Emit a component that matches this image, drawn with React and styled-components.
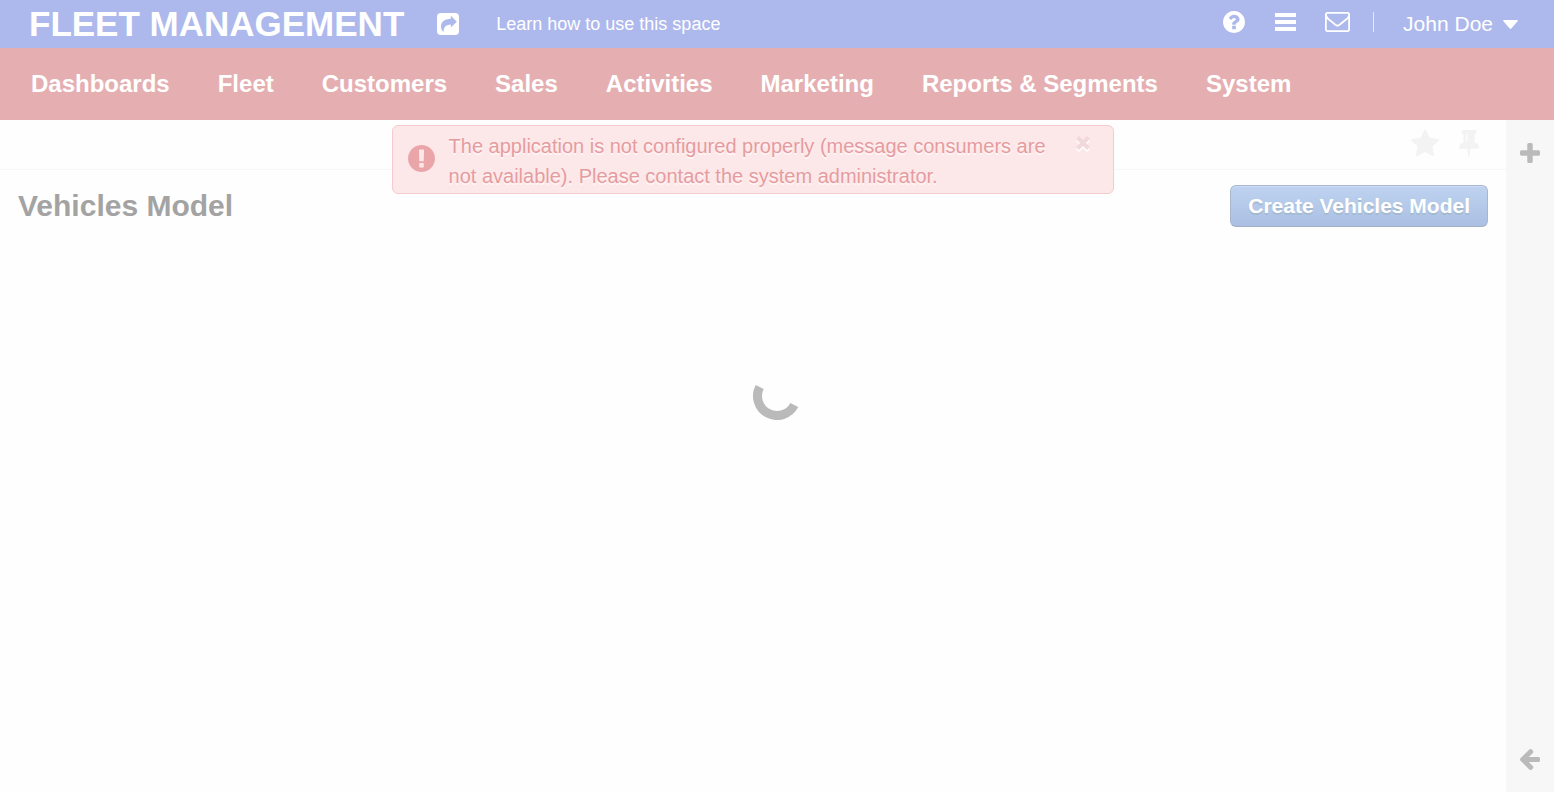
import React from "react";
import styled, { createGlobalStyle } from "styled-components";

const GlobalStyle = createGlobalStyle`
  *, *::before, *::after { box-sizing: border-box; }
  html, body, #root { height: 100%; }
  body {
    margin: 0;
    background: #fefefe;
    color: #a3a3a3;
    font-family: "Liberation Sans", Arial, sans-serif;
  }
  button { font-family: inherit; cursor: pointer; }
`;

const Page = styled.div`
  display: flex;
  flex-direction: column;
  min-height: 100%;
`;

const TopBar = styled.header`
  display: flex;
  align-items: center;
  justify-content: space-between;
  height: 48px;
  padding: 0 36px 0 29px;
  background: #adb9ed;
  color: #fff;
`;

const BarGroup = styled.div`
  display: flex;
  align-items: center;
  gap: ${(p) => p.$gap}px;
  padding-bottom: ${(p) => p.$lift || 0}px;
`;

const Brand = styled.a`
  color: #fff;
  font-size: 35px;
  line-height: 48px;
  font-weight: bold;
  text-decoration: none;
  white-space: nowrap;
`;

const HelpLink = styled.a`
  color: #fff;
  font-size: 18px;
  line-height: 50px;
  text-decoration: none;
  white-space: nowrap;
`;

const IconButton = styled.button`
  display: flex;
  flex: none;
  justify-content: center;
  min-width: ${(p) => p.$minWidth || 0}px;
  padding: 0;
  border: 0;
  background: none;
  color: ${(p) => p.$color || "#fff"};
`;

const Divider = styled.span`
  width: 1px;
  height: 20px;
  background: #e3e8fa;
`;

const UserButton = styled.button`
  display: flex;
  align-items: center;
  gap: 10px;
  padding: 0;
  border: 0;
  background: none;
  color: #fff;
  font-size: 21px;
  line-height: 48px;
  white-space: nowrap;
`;

const Nav = styled.nav`
  display: flex;
  align-items: center;
  gap: 48px;
  height: 72px;
  padding: 0 31px;
  background: #e5afb2;
`;

const NavLink = styled.a`
  color: #fff;
  font-size: 24px;
  line-height: 72px;
  font-weight: bold;
  text-decoration: none;
  white-space: nowrap;
`;

const Body = styled.div`
  display: flex;
  flex: 1;
`;

const Main = styled.main`
  position: relative;
  flex: 1;
  min-width: 0;
`;

const PageTools = styled.div`
  display: flex;
  align-items: center;
  justify-content: flex-end;
  gap: 20px;
  height: 50px;
  padding: 0 27px 2px;
  border-bottom: 1px solid #f6f6f6;
`;

const TitleRow = styled.div`
  display: flex;
  align-items: center;
  justify-content: space-between;
  padding: 15px 18px;
`;

const Title = styled.h1`
  margin: 0;
  font-size: 30px;
  line-height: 42px;
  font-weight: bold;
  color: #a3a3a3;
`;

const PrimaryButton = styled.button`
  height: 42px;
  padding: 0 17px;
  border: 1px solid #a9b6cf;
  border-bottom-color: #a3afc5;
  border-radius: 6px;
  background: linear-gradient(#bfd2f0, #abbfe3);
  box-shadow: inset 0 1px 0 #cddcf4;
  color: #fff;
  font-size: 21px;
  font-weight: bold;
  text-shadow: 0 2px 0 #a3bacf;
  white-space: nowrap;
`;

const Alert = styled.div`
  position: absolute;
  top: 5px;
  left: 26%;
  width: 48%;
  display: flex;
  align-items: center;
  gap: 14px;
  padding: 5px 23px 2px 15px;
  border: 1px solid #f6cbd0;
  border-radius: 6px;
  background: #fde8e9;
  color: #e9a5a8;
`;

const AlertIcon = styled.span`
  padding-bottom: 6px;
`;

const AlertText = styled.p`
  flex: 1;
  margin: 0;
  font-size: 20px;
  line-height: 30px;
  color: #e59ca0;
  text-shadow: 0 2px 0 #fff5f5;
`;

const CloseButton = styled(IconButton)`
  align-self: flex-start;
  margin-top: 5px;
  filter: drop-shadow(0 2px 0 #fff);
`;

const Sidebar = styled.aside`
  display: flex;
  flex-direction: column;
  align-items: center;
  justify-content: space-between;
  width: 48px;
  padding: 23px 0 22px;
  background: #f7f7f7;
`;

const Loader = styled.div`
  position: fixed;
  inset: 0;
  display: flex;
  align-items: center;
  justify-content: center;
  pointer-events: none;
`;

const Svg = styled.svg`
  display: block;
  flex: none;
  fill: currentColor;
`;

const ICONS = {
  share: ["0 0 22 22", "M4 0h14q4 0 4 4v14q0 4-4 4h-14q-4 0-4-4v-14q0-4 4-4zM13.800 2.700v3.100C7.500 6 4 9 4 13.500c0 2.500 .9 4.200 2.600 5.600C6.400 14.500 8.500 11.800 13.800 11.500v3.100l6-5.900z"],
  question: ["128 128 1536 1536", "M1024 1376v-192q0-14-9-23t-23-9h-192q-14 0-23 9t-9 23v192q0 14 9 23t23 9h192q14 0 23-9t9-23zm256-672q0-88-55.5-163t-138.5-116-170-41q-243 0-371 213-15 24 8 42l132 100q7 6 19 6 16 0 25-12 53-68 86-92 34-24 86-24 48 0 85.5 26t37.5 59q0 38-20 61t-68 45q-63 28-115.5 86.5t-52.5 125.5v36q0 14 9 23t23 9h192q14 0 23-9t9-23q0-19 21.5-49.5t54.5-49.5q32-18 49-28.5t46-35 44.5-48 28-60.5 12.5-81zm384 192q0 209-103 385.5t-279.5 279.5-385.5 103-385.5-103-279.5-279.5-103-385.5 103-385.5 279.5-279.5 385.5-103 385.5 103 279.5 279.5 103 385.5z"],
  bars: ["0 0 21 18", "M0 0h21v4h-21zM0 7h21v4h-21zM0 14h21v4h-21z"],
  envelope: ["0 256 1792 1408", "M1664 1504v-768q-32 36-69 66-268 206-426 338-51 43-83 67t-86.5 48.500-102.500 24.500h-2q-48 0-102.500-24.500t-86.500-48.500-83-67q-158-132-426-338-37-30-69-66v768q0 13 9.500 22.500t22.500 9.500h1472q13 0 22.500-9.500t9.500-22.500zm0-1051v-24.500l-.5-13-3-12.500-5.500-9-9-7.500-14-2.500h-1472q-13 0-22.500 9.500t-9.500 22.500q0 168 147 284 193 152 401 317 6 5 35 29.500t46 37.500 44.500 31.500 50.500 27.500 43 9h2q20 0 43-9t50.500-27.500 44.500-31.500 46-37.500 35-29.500q208-165 401-317 54-43 100.500-115.500t46.500-131.500zm128-37v1088q0 66-47 113t-113 47h-1472q-66 0-113-47t-47-113v-1088q0-66 47-113t113-47h1472q66 0 113 47t47 113z"],
  caret: ["0 0 15 9", "M1 0h13q1.500 .2 .6 1.300l-6.300 7.200q-.8 .8-1.600 0l-6.300-7.200q-.9-1.100 .6-1.300z"],
  star: ["64 64 1664 1600", "M1728 647q0 22-26 48l-363 354 86 500q1 7 1 20 0 21-10.500 35.500t-30.500 14.500q-19 0-40-12l-449-236-449 236q-22 12-40 12-21 0-31.500-14.500t-10.500-35.500q0-6 2-20l86-500-364-354q-25-27-25-48 0-37 56-46l502-73 225-455q19-41 49-41t49 41l225 455 502 73q56 9 56 46z"],
  pin: ["320 128 1152 1664", "M800 864v-448q0-14-9-23t-23-9-23 9-9 23v448q0 14 9 23t23 9 23-9 9-23zm672 352q0 26-19 45t-45 19h-429l-51 483q-2 12-10.500 20.500t-20.500 8.500h-1q-27 0-32-27l-76-485h-404q-26 0-45-19t-19-45q0-123 78.500-221.500t177.500-98.500v-512q-52 0-90-38t-38-90 38-90 90-38h640q52 0 90 38t38 90-38 90-90 38v512q99 0 177.500 98.500t78.500 221.500z"],
  plus: ["192 128 1408 1408", "M1600 736v192q0 40-28 68t-68 28h-416v416q0 40-28 68t-68 28h-192q-40 0-68-28t-28-68v-416h-416q-40 0-68-28t-28-68v-192q0-40 28-68t68-28h416v-416q0-40 28-68t68-28h192q40 0 68 28t28 68v416h416q40 0 68 28t28 68z"],
  arrow: ["192 184 1472 1556", "M1664 896v128q0 53-32.500 90.500t-84.500 37.500h-704l293 294q38 36 38 90t-38 90l-75 76q-37 37-90 37-52 0-91-37l-651-652q-37-37-37-90 0-52 37-91l651-650q38-38 91-38 52 0 90 38l75 74q38 38 38 91t-38 91l-293 293h704q52 0 84.500 37.500t32.500 90.500z"],
  exclamation: ["128 128 1536 1536", "M896 128q209 0 385.500 103t279.500 279.500 103 385.500-103 385.500-279.500 279.500-385.500 103-385.500-103-279.500-279.500-103-385.500 103-385.500 279.500-279.500 385.500-103zm128 1247v-190q0-14-9-23.500t-22-9.500h-192q-13 0-23 10t-10 23v190q0 13 10 23t23 10h192q13 0 22-9.500t9-23.500zm-2-344l18-621q0-12-10-18-10-8-24-8h-220q-14 0-24 8-10 6-10 18l17 621q0 10 10 17.500t24 7.500h185q14 0 23.500-7.500t10.500-17.500z"],
  close: ["0 0 14 14", "M3 0l4 4 4-4 3 3-4 4 4 4-3 3-4-4-4 4-3-3 4-4-4-4z"],
};

function Icon({ name, w, h = w }) {
  const [viewBox, d] = ICONS[name];
  return (
    <Svg viewBox={viewBox} width={w} height={h} preserveAspectRatio="none" aria-hidden="true">
      <path d={d} fillRule={name === "share" ? "evenodd" : "nonzero"} />
    </Svg>
  );
}

const NAV_ITEMS = [
  "Dashboards",
  "Fleet",
  "Customers",
  "Sales",
  "Activities",
  "Marketing",
  "Reports & Segments",
  "System",
];

export default function App() {
  return (
    <Page>
      <GlobalStyle />
      <TopBar>
        <BarGroup $gap={33}>
          <Brand href="#home">FLEET MANAGEMENT</Brand>
          <BarGroup $gap={37}>
            <IconButton aria-label="Share">
              <Icon name="share" w={22} />
            </IconButton>
            <HelpLink href="#learn">Learn how to use this space</HelpLink>
          </BarGroup>
        </BarGroup>
        <BarGroup $gap={29}>
          <BarGroup $gap={23} $lift={4}>
            <BarGroup $gap={27}>
              <IconButton $minWidth={25} aria-label="Help">
                <Icon name="question" w={22} />
              </IconButton>
              <IconButton $minWidth={25} aria-label="Shortcuts">
                <Icon name="bars" w={21} h={18} />
              </IconButton>
              <IconButton $minWidth={25} aria-label="Messages">
                <Icon name="envelope" w={25} h={20} />
              </IconButton>
            </BarGroup>
            <Divider />
          </BarGroup>
          <UserButton>
            John Doe
            <Icon name="caret" w={15} h={9} />
          </UserButton>
        </BarGroup>
      </TopBar>
      <Nav>
        {NAV_ITEMS.map((item) => (
          <NavLink key={item} href="#nav">
            {item}
          </NavLink>
        ))}
      </Nav>
      <Body>
        <Main>
          <PageTools>
            <IconButton $color="#f3f3f3" aria-label="Add to favorites">
              <Icon name="star" w={28} h={27} />
            </IconButton>
            <IconButton $color="#f3f3f3" aria-label="Pin page">
              <Icon name="pin" w={20} h={27} />
            </IconButton>
          </PageTools>
          <TitleRow>
            <Title>Vehicles Model</Title>
            <PrimaryButton>Create Vehicles Model</PrimaryButton>
          </TitleRow>
          <Alert role="alert">
            <AlertIcon>
              <Icon name="exclamation" w={27} />
            </AlertIcon>
            <AlertText>
              The application is not configured properly (message consumers are
              not available). Please contact the system administrator.
            </AlertText>
            <CloseButton $color="#f1d9db" aria-label="Close">
              <Icon name="close" w={14} />
            </CloseButton>
          </Alert>
        </Main>
        <Sidebar>
          <IconButton $color="#bababa" aria-label="Add widget">
            <Icon name="plus" w={20} />
          </IconButton>
          <IconButton $color="#bababa" aria-label="Expand sidebar">
            <Icon name="arrow" w={20} h={21} />
          </IconButton>
        </Sidebar>
      </Body>
      <Loader role="status" aria-label="Loading">
        <svg width="48" height="48" viewBox="-24 -24 48 48">
          <path d="M-17.300 -9A19.500 19.500 0 0 0 17.300 9" fill="none" stroke="#bababa" strokeWidth="9" />
        </svg>
      </Loader>
    </Page>
  );
}
